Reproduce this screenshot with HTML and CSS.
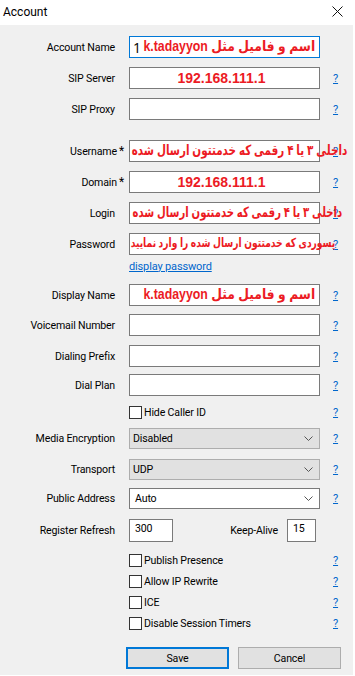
FILE: index.html
```html
<!DOCTYPE html>
<html>
<head>
<meta charset="utf-8">
<link rel="stylesheet" href="styles.css">
</head>
<body>
<div class="window">
  <div class="titlebar">
    <span class="title">Account</span>
    <svg class="close" width="11" height="11" viewBox="0 0 11 11"><path d="M0.5 0.5 L10.5 10.5 M10.5 0.5 L0.5 10.5" stroke="#111" stroke-width="1"/></svg>
  </div>
  <div class="form">
    <div class="row mb9">
      <span class="lbl">Account Name</span>
      <div class="field input focus">
        <span class="one">1</span>
        <span class="red fa bold an" dir="rtl">اسم و فامیل مثل k.tadayyon</span>
      </div>
      <span class="help"></span>
    </div>
    <div class="row mb9">
      <span class="lbl">SIP Server</span>
      <div class="field input center"><span class="red ip">192.168.111.1</span></div>
      <a class="help">?</a>
    </div>
    <div class="row mb20">
      <span class="lbl">SIP Proxy</span>
      <div class="field input"></div>
      <a class="help">?</a>
    </div>
    <div class="row mb9">
      <span class="lbl">Username<span class="star">*</span></span>
      <div class="field input">
        <span class="red fa over user" dir="rtl">داخلی ۳ یا ۴ رقمی که خدمتتون ارسال شده</span>
      </div>
      <a class="help">?</a>
    </div>
    <div class="row mb9">
      <span class="lbl">Domain<span class="star">*</span></span>
      <div class="field input center"><span class="red ip">192.168.111.1</span></div>
      <a class="help">?</a>
    </div>
    <div class="row mb9">
      <span class="lbl">Login</span>
      <div class="field input">
        <span class="red fa over login" dir="rtl">داخلی ۳ یا ۴ رقمی که خدمتتون ارسال شده</span>
      </div>
      <a class="help">?</a>
    </div>
    <div class="row">
      <span class="lbl">Password</span>
      <div class="field input">
        <span class="red fa over pass" dir="rtl">پسوردی که خدمتتون ارسال شده را وارد نمایید</span>
      </div>
      <a class="help">?</a>
    </div>
    <div class="linkrow"><a class="link">display password</a></div>
    <div class="row mb8">
      <span class="lbl">Display Name</span>
      <div class="field input">
        <span class="red fa bold dn" dir="rtl">اسم و فامیل مثل k.tadayyon</span>
      </div>
      <a class="help">?</a>
    </div>
    <div class="row mb9">
      <span class="lbl">Voicemail Number</span>
      <div class="field input"></div>
      <a class="help">?</a>
    </div>
    <div class="row mb7">
      <span class="lbl">Dialing Prefix</span>
      <div class="field input"></div>
      <a class="help">?</a>
    </div>
    <div class="row mb8">
      <span class="lbl">Dial Plan</span>
      <div class="field input"></div>
      <a class="help">?</a>
    </div>
    <div class="row chkrow mb8 hide">
      <span class="lbl"></span>
      <div class="field chk"><span class="box"></span><span>Hide Caller ID</span></div>
      <a class="help">?</a>
    </div>
    <div class="row sel mb10">
      <span class="lbl">Media Encryption</span>
      <div class="field select gray"><span>Disabled</span><svg class="chev" width="9" height="5" viewBox="0 0 9 5"><path d="M0.5 0.5 L4.5 4.5 L8.5 0.5" fill="none" stroke="#555" stroke-width="1"/></svg></div>
      <a class="help">?</a>
    </div>
    <div class="row sel mb8">
      <span class="lbl">Transport</span>
      <div class="field select gray"><span>UDP</span><svg class="chev" width="9" height="5" viewBox="0 0 9 5"><path d="M0.5 0.5 L4.5 4.5 L8.5 0.5" fill="none" stroke="#555" stroke-width="1"/></svg></div>
      <a class="help">?</a>
    </div>
    <div class="row sel mb10">
      <span class="lbl">Public Address</span>
      <div class="field select white"><span>Auto</span><svg class="chev" width="9" height="5" viewBox="0 0 9 5"><path d="M0.5 0.5 L4.5 4.5 L8.5 0.5" fill="none" stroke="#555" stroke-width="1"/></svg></div>
      <a class="help">?</a>
    </div>
    <div class="row reg mb10">
      <span class="lbl">Register Refresh</span>
      <div class="field regfield">
        <span class="input small rr">300</span>
        <span class="ka">Keep-Alive</span>
        <span class="input small kav">15</span>
      </div>
      <span class="help"></span>
    </div>
    <div class="row chkrow mb4">
      <span class="lbl"></span>
      <div class="field chk"><span class="box"></span><span>Publish Presence</span></div>
      <a class="help">?</a>
    </div>
    <div class="row chkrow mb4">
      <span class="lbl"></span>
      <div class="field chk"><span class="box"></span><span>Allow IP Rewrite</span></div>
      <a class="help">?</a>
    </div>
    <div class="row chkrow mb4">
      <span class="lbl"></span>
      <div class="field chk"><span class="box"></span><span>ICE</span></div>
      <a class="help">?</a>
    </div>
    <div class="row chkrow mb15">
      <span class="lbl"></span>
      <div class="field chk"><span class="box"></span><span>Disable Session Timers</span></div>
      <a class="help">?</a>
    </div>
    <div class="buttons">
      <span class="btn save">Save</span>
      <span class="btn cancel">Cancel</span>
    </div>
  </div>
</div>
</body>
</html>
```

FILE: styles.css
```css
html, body {
  margin: 0;
  padding: 0;
  background: #ffffff;
}
body {
  font-family: Roboto, "Open Sans", sans-serif;
  font-size: 10.6px;
  letter-spacing: -0.15px;
  color: #000;
}
.window {
  width: 353px;
  height: 675px;
  background: #f0f0f0;
  overflow: hidden;
}
.titlebar {
  height: 25px;
  background: #ffffff;
  display: flex;
  align-items: center;
  justify-content: space-between;
  padding: 0 10px 0 3px;
  box-sizing: border-box;
}
.title {
  font-size: 12px;
  letter-spacing: 0;
  margin-top: -2px;
}
.close {
  margin-top: -2px;
}
.form {
  padding-top: 11px;
  display: flex;
  flex-direction: column;
}
.row {
  display: grid;
  grid-template-columns: 129px 191px 1fr;
  align-items: center;
  height: 22px;
}
.mb4 { margin-bottom: 4px; }
.mb7 { margin-bottom: 7px; }
.mb8 { margin-bottom: 8px; }
.mb9 { margin-bottom: 9px; }
.mb10 { margin-bottom: 10px; }
.mb15 { margin-bottom: 15px; }
.mb20 { margin-bottom: 20px; }
.lbl {
  text-align: right;
  padding-right: 14px;
  white-space: nowrap;
  color: #000;
}
.star {
  margin-left: 2px;
  margin-right: -9px;
  font-size: 12px;
}
.field {
  box-sizing: border-box;
  height: 100%;
  position: relative;
}
.input {
  background: #ffffff;
  border: 1px solid #7a7a7a;
  box-sizing: border-box;
  display: flex;
  align-items: center;
}
.input.focus {
  border-color: #0078d7;
}
.input.center {
  justify-content: center;
}
.help {
  padding-left: 13px;
  color: #0066cc;
  text-decoration: underline;
  font-size: 11px;
}
.red {
  color: #ec1b24;
  white-space: nowrap;
  letter-spacing: 0;
}
.ip {
  font-family: "Liberation Sans", Arial, sans-serif;
  font-weight: bold;
  font-size: 14px;
  margin-left: -6px;
}
.fa {
  font-family: "Liberation Sans", "DejaVu Sans", sans-serif;
  transform-origin: right center;
}
.bold {
  font-weight: bold;
}
.one {
  position: absolute;
  left: 3px;
  top: 1px;
  font-size: 14px;
  font-family: "Open Sans", sans-serif;
}
.an, .dn {
  position: absolute;
  right: 4px;
  top: 1px;
  font-size: 14px;
  transform: scaleX(0.88);
}
.over {
  position: absolute;
  top: 1px;
  font-size: 14px;
}
.user {
  right: -28px;
  font-weight: bold;
  transform: scaleX(0.74);
}
.login {
  right: -23px;
  font-weight: bold;
  transform: scaleX(0.72);
}
.pass {
  right: -16px;
  font-size: 12.5px;
  font-weight: bold;
  transform: scaleX(0.73);
}
.linkrow {
  margin-top: 3px;
  height: 16px;
  padding-left: 129px;
  margin-bottom: 10px;
  display: flex;
  align-items: center;
}
.link {
  color: #0066cc;
  text-decoration: underline;
  font-size: 11px;
}
.chkrow {
  height: 17px;
}
.hide {
  height: 16px;
}
.chk {
  display: flex;
  align-items: center;
  gap: 2px;
}
.box {
  width: 13px;
  height: 13px;
  box-sizing: border-box;
  border: 1px solid #333;
  background: #fff;
}
.sel {
  height: 21px;
}
.select {
  box-sizing: border-box;
  display: flex;
  align-items: center;
  justify-content: space-between;
  padding: 0 6px 0 3px;
}
.select.gray {
  background: #e1e1e1;
  border: 1px solid #adadad;
}
.select.white {
  background: #ffffff;
  border: 1px solid #7a7a7a;
  padding-left: 5px;
}
.reg {
  height: 23px;
}
.regfield {
  display: flex;
  align-items: center;
}
.small {
  height: 23px;
  align-items: flex-start;
  padding-top: 2px;
}
.rr {
  width: 44px;
  padding-left: 5px;
}
.kav {
  width: 29px;
  padding-left: 5px;
  margin-right: 4px;
}
.ka {
  margin-left: auto;
  margin-right: 9px;
}
.buttons {
  display: flex;
  gap: 9px;
  padding-left: 126px;
}
.btn {
  width: 103px;
  height: 22px;
  box-sizing: border-box;
  background: #e1e1e1;
  display: flex;
  align-items: center;
  justify-content: center;
}
.save {
  border: 2px solid #0078d7;
}
.cancel {
  border: 1px solid #adadad;
}
```
